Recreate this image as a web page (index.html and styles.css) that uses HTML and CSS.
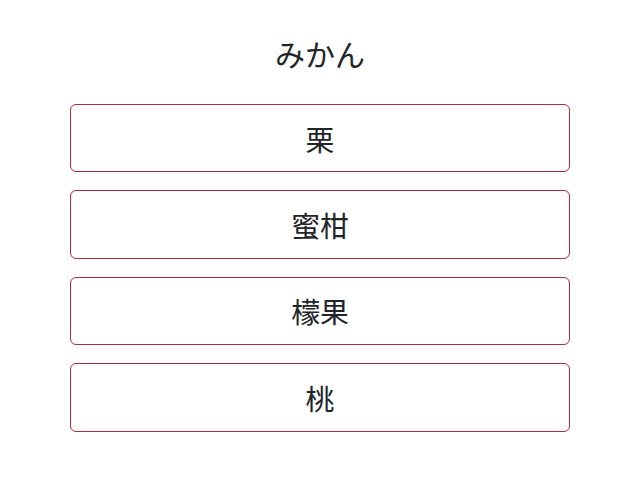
FILE: index.html
```html
<!DOCTYPE html>
<html lang="ja">
<head>
<meta charset="utf-8">
<link rel="stylesheet" href="styles.css">
</head>
<body>
<main class="page">
  <h1 class="title">みかん</h1>
  <ul class="list">
    <li class="item">栗</li>
    <li class="item">蜜柑</li>
    <li class="item">檬果</li>
    <li class="item">桃</li>
  </ul>
</main>
</body>
</html>
```
FILE: styles.css
```css
html, body {
  margin: 0;
  padding: 0;
  background: #fff;
}
body {
  font-family: "Noto Sans CJK JP", "Noto Sans", sans-serif;
  color: #212529;
}
.page {
  width: 500px;
  margin: 0 auto;
  padding-top: 32px;
}
.title {
  margin: 0 0 30px;
  font-size: 30px;
  font-weight: 400;
  line-height: 42px;
  text-align: center;
}
.list {
  list-style: none;
  margin: 0;
  padding: 0;
  display: flex;
  flex-direction: column;
  gap: 18px;
}
.item {
  box-sizing: border-box;
  height: 68.4px;
  border: 1px solid #b02a37;
  border-radius: 6px;
  display: flex;
  align-items: center;
  justify-content: center;
  font-size: 28.8px;
}
```
